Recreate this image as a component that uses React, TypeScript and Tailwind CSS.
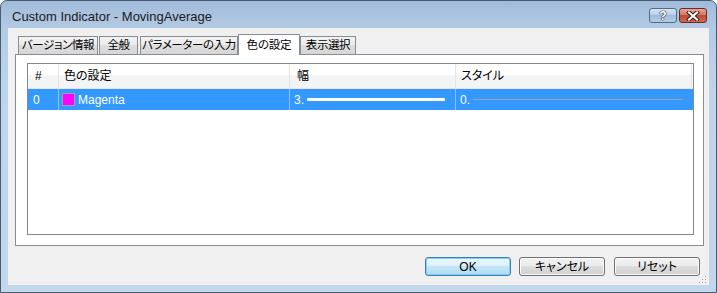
import React from 'react';

const tabs = [
  { label: 'バージョン情報', w: 'w-[80px]', ml: 'ml-0' },
  { label: '全般', w: 'w-[39px]', ml: 'ml-[1px]' },
  { label: 'パラメーターの入力', w: 'w-[98px]', ml: 'ml-[2px]' },
  { label: '色の設定', w: 'w-[62px]', ml: 'ml-0', active: true },
  { label: '表示選択', w: 'w-[56px]', ml: 'ml-0' },
];

function TitleButtons() {
  return (
    <div className="flex items-center gap-[2px] mr-[9px] mt-[2px]">
      <div className="w-[28px] h-[15px] rounded-[3px] border border-[#4f6a8c] bg-[linear-gradient(#d6e4f3_0%,#b7cde6_50%,#9fbbdd_50%,#b5cde8_100%)] flex items-center justify-center">
        <span className="text-[12px] font-bold leading-none text-white [text-shadow:0_0_1px_#222,0_0_1px_#222,0_0_1px_#222]">?</span>
      </div>
      <div className="w-[28px] h-[15px] rounded-[3px] border border-[#6b2a22] bg-[linear-gradient(#e8a593_0%,#d2735f_50%,#c14a33_50%,#d0694f_100%)] flex items-center justify-center">
        <svg width="14" height="10" viewBox="0 0 14 10">
          <path d="M3 1.5 L11 8.5 M11 1.5 L3 8.5" stroke="#3a1410" strokeWidth="4" strokeLinecap="square" />
          <path d="M3 1.5 L11 8.5 M11 1.5 L3 8.5" stroke="#ffffff" strokeWidth="2.2" strokeLinecap="square" />
        </svg>
      </div>
    </div>
  );
}

function Button({ label, primary, className }: { label: string; primary?: boolean; className?: string }) {
  return (
    <div
      className={
        'w-[86px] h-[19px] rounded-[3px] border flex items-center justify-center text-[12px] text-black whitespace-nowrap ' +
        (primary
          ? 'border-[#3c7fb1] shadow-[inset_0_0_0_1px_#7fd0f7] bg-[linear-gradient(#ecf7fd_0%,#dcf0fb_50%,#c4e5f7_50%,#b0dcf3_100%)] '
          : 'border-[#707070] shadow-[inset_0_0_0_1px_#fcfcfc] bg-[linear-gradient(#f2f2f2_0%,#ebebeb_50%,#dddddd_50%,#cfcfcf_100%)] ') +
        (className ?? '')
      }
    >
      {label}
    </div>
  );
}

export default function App() {
  return (
    <div className="w-[717px] h-[293px] flex flex-col border border-[#4a5a70] rounded-t-[7px] bg-[linear-gradient(#a0bbda_0%,#b4cbe5_10%,#bed4ea_30%,#c2d7ec_100%)] font-['Liberation_Sans','Noto_Sans_CJK_JP',sans-serif] [font-feature-settings:'palt'] overflow-hidden">
      {/* title bar */}
      <div className="h-[27px] flex items-center justify-between">
        <span className="ml-[11px] mt-[5px] text-[13px] text-[#1b1b1b] whitespace-nowrap">Custom Indicator - MovingAverage</span>
        <TitleButtons />
      </div>

      {/* client */}
      <div className="relative mx-[7px] mb-[7px] flex-1 bg-[#f0f0f0] flex flex-col">
        {/* tab strip */}
        <div className="mt-[6px] h-[20px] pl-[10px] flex items-end relative z-10">
          {tabs.map((t) =>
            t.active ? (
              <div
                key={t.label}
                className={`${t.w} ${t.ml} h-[21px] -mb-[1px] border border-b-0 border-[#898c95] bg-white flex items-start justify-center pt-[2px] text-[11.5px] tracking-[-0.2px] whitespace-nowrap text-black`}
              >
                {t.label}
              </div>
            ) : (
              <div
                key={t.label}
                className={`${t.w} ${t.ml} h-[18px] border border-b-0 border-[#898c95] bg-[linear-gradient(#f2f2f2_0%,#ebebeb_50%,#dddddd_50%,#d6d6d6_100%)] flex items-center justify-center text-[11.5px] tracking-[-0.4px] whitespace-nowrap overflow-hidden text-black`}
              >
                {t.label}
              </div>
            )
          )}
        </div>

        {/* tab panel */}
        <div className="ml-[7px] w-[689px] h-[192px] border border-[#898c95] bg-white pl-[11px] pt-[8px]">
          {/* list view */}
          <div className="w-[667px] h-[172px] border border-[#828790] bg-white flex flex-col">
            {/* header */}
            <div className="h-[25px] flex border-b border-[#e5e5e5] bg-[linear-gradient(#ffffff_0%,#ffffff_45%,#f3f4f6_45%,#f3f4f6_100%)] text-[12px] text-black">
              <div className="w-[31px] border-r border-[#e5e5e5] pl-[7px] flex items-center">#</div>
              <div className="w-[231px] border-r border-[#e5e5e5] pl-[5px] flex items-center">色の設定</div>
              <div className="w-[166px] border-r border-[#e5e5e5] pl-[7px] flex items-center">幅</div>
              <div className="w-[236px] border-r border-[#e5e5e5] pl-[5px] flex items-center">スタイル</div>
            </div>
            {/* selected row */}
            <div className="h-[21px] flex bg-[#3399ff] text-[12px] text-white">
              <div className="w-[31px] border-r border-[#8cc3f9] pl-[5px] flex items-center">0</div>
              <div className="w-[231px] border-r border-[#8cc3f9] pl-[3px] flex items-center gap-[3px]">
                <span className="w-[13px] h-[13px] bg-[#ff00ff] border border-[#a0a0a0]" />
                <span>Magenta</span>
              </div>
              <div className="w-[166px] border-r border-[#8cc3f9] pl-[4px] pr-[10px] flex items-center gap-[3px]">
                <span>3.</span>
                <span className="flex-1 h-[3px] bg-white rounded-[1px]" />
              </div>
              <div className="w-[236px] pl-[4px] pr-[9px] flex items-center gap-[3px]">
                <span>0.</span>
                <span className="flex-1 h-[1px] bg-[#a0a0a0]" />
              </div>
            </div>
          </div>
        </div>

        {/* buttons */}
        <div className="mt-[11px] flex justify-end pr-[9px]">
          <Button label="OK" primary />
          <Button label="キャンセル" className="ml-[8px]" />
          <Button label="リセット" className="ml-[9px]" />
        </div>

        {/* size grip */}
        <svg className="absolute right-[2px] bottom-[1px]" width="8" height="8" viewBox="0 0 8 8">
          <rect x="6" y="0" width="1" height="1" fill="#a0a0a0" />
          <rect x="3" y="3" width="1" height="1" fill="#a0a0a0" />
          <rect x="6" y="3" width="1" height="1" fill="#a0a0a0" />
          <rect x="0" y="6" width="1" height="1" fill="#a0a0a0" />
          <rect x="3" y="6" width="1" height="1" fill="#a0a0a0" />
          <rect x="6" y="6" width="1" height="1" fill="#a0a0a0" />
        </svg>
      </div>
    </div>
  );
}
